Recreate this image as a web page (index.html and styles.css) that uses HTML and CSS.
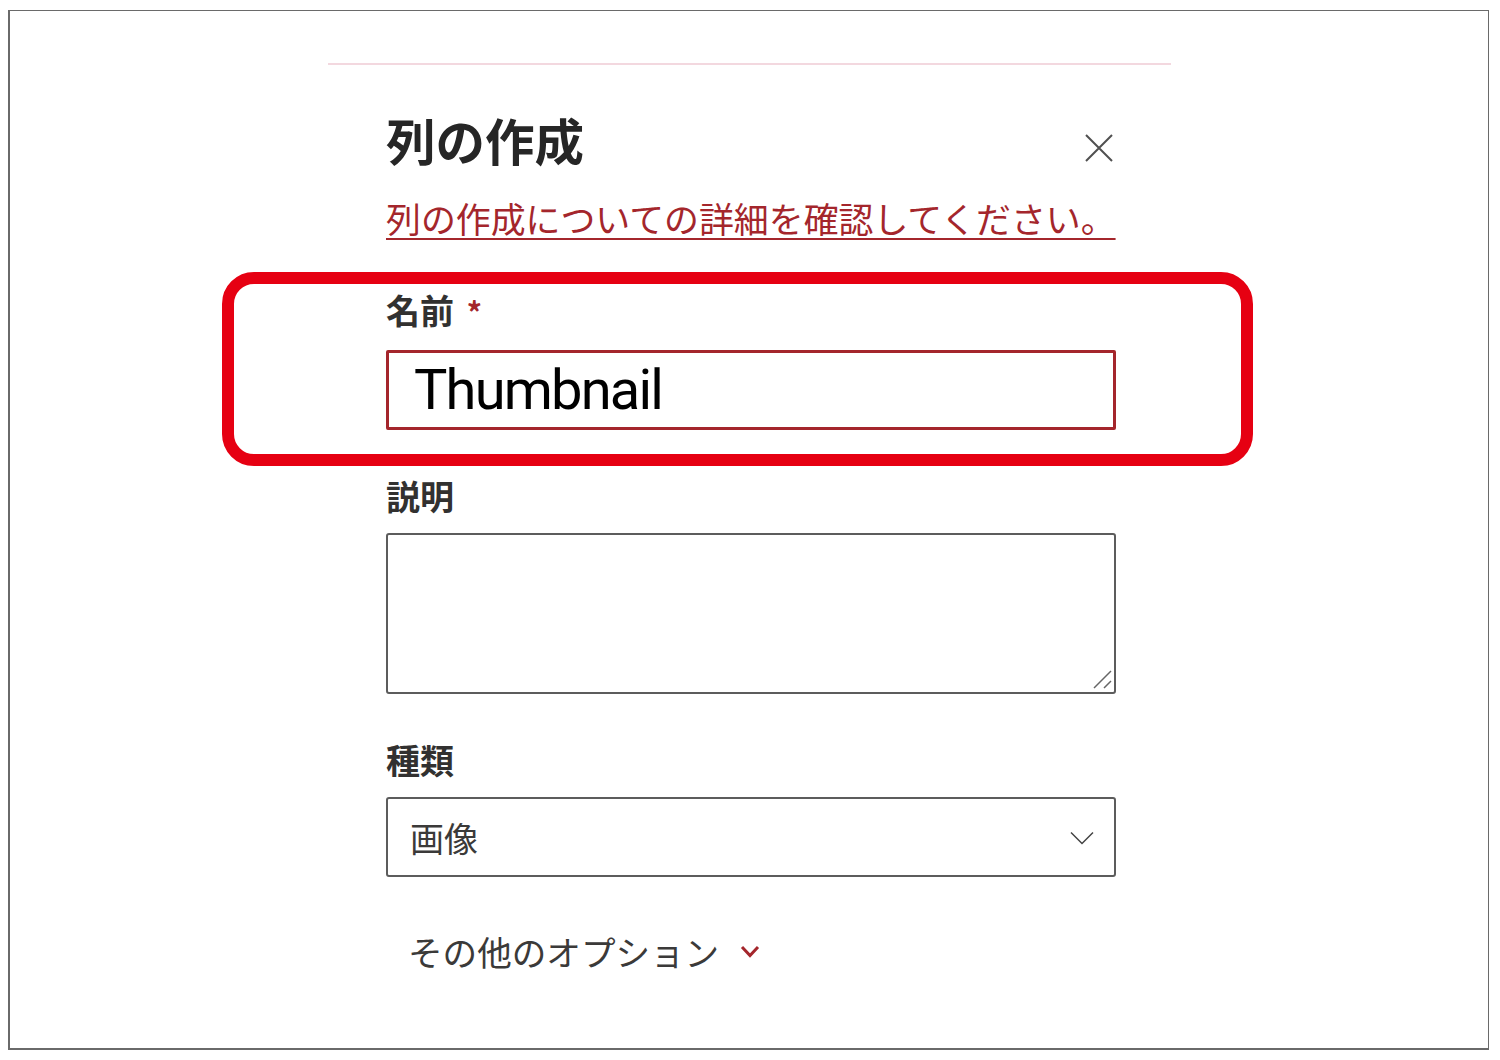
FILE: index.html
```html
<!DOCTYPE html>
<html lang="ja">
<head>
    <meta charset="UTF-8">
    <meta name="viewport" content="width=device-width, initial-scale=1.0">
    <title>列の作成</title>
    <link rel="stylesheet" href="styles.css">
</head>
<body>

<div class="frame">
    <div class="panel">
        <div class="header">
            <h1 class="title">列の作成</h1>
            <div class="close">
                <svg width="28" height="28" viewBox="0 0 28 28">
                    <path d="M1 1 L27 27 M27 1 L1 27" stroke="#505050" stroke-width="2" fill="none"/>
                </svg>
            </div>
        </div>
        <a class="learn" href="#">列の作成についての詳細を確認してください。</a>

        <div class="field field-name">
            <div class="label">名前 <span class="req">*</span></div>
            <div class="box box-active">Thumbnail</div>
            <div class="highlight"></div>
        </div>

        <div class="field">
            <div class="label">説明</div>
            <div class="box box-area">
                <svg class="grip" width="22" height="22" viewBox="0 0 22 22">
                    <path d="M20 2 L3 19 M20 12 L13 19" stroke="#666" stroke-width="1.5" fill="none"/>
                </svg>
            </div>
        </div>

        <div class="field">
            <div class="label">種類</div>
            <div class="box box-select">
                <span>画像</span>
                <svg width="24" height="14" viewBox="0 0 24 14">
                    <path d="M1 1.5 L12 12.5 L23 1.5" stroke="#444" stroke-width="1.5" fill="none"/>
                </svg>
            </div>
        </div>

        <div class="more">
            <span>その他のオプション</span>
            <svg width="20" height="13" viewBox="0 0 20 13">
                <path d="M2 2 L10 10.5 L18 2" stroke="#a4262c" stroke-width="3" fill="none"/>
            </svg>
        </div>
    </div>
</div>

</body>
</html>
```

FILE: styles.css
```css
body {
    margin: 0;
    background-color: #ffffff;
    font-family: "Noto Sans CJK JP", "Noto Sans", sans-serif;
    color: #323130;
    overflow: hidden;
}
.frame {
    box-sizing: border-box;
    width: 1481px;
    height: 1040px;
    margin: 10px 0 0 8px;
    border: 2px solid #6a6a6a;
    border-top-width: 1px;
    border-right-width: 1px;
}
.panel {
    width: 843px;
    margin: 52px 0 0 318px;
    border-top: 2px solid #f3d8df;
    padding-left: 58px;
    box-sizing: border-box;
}
.header {
    width: 730px;
    margin-top: 46px;
    display: flex;
    justify-content: space-between;
    align-items: center;
}
.title {
    margin: 0;
    font-size: 49.5px;
    line-height: 58px;
    font-weight: bold;
    color: #262626;
}
.close {
    width: 28px;
    height: 28px;
    margin: 16px 3px 0 0;
}
.close svg {
    display: block;
}
.learn {
    display: inline-block;
    margin-top: 27px;
    font-size: 34.9px;
    line-height: 45px;
    color: #a4262c;
    text-decoration: underline;
    text-decoration-thickness: 2px;
    text-underline-offset: 5px;
}
.field {
    width: 730px;
    margin-top: 43px;
    position: relative;
}
.field-name {
    margin-top: 46px;
}
.label {
    font-size: 34px;
    line-height: 45px;
    font-weight: bold;
    color: #323130;
}
.req {
    color: #a4262c;
    font-size: 30px;
    margin-left: 5px;
}
.box {
    box-sizing: border-box;
    margin-top: 15px;
    height: 80px;
    border: 2px solid #5c5c5c;
    border-radius: 3px;
    position: relative;
}
.box-active {
    margin-top: 16px;
    border: 3px solid #a4262c;
    border-radius: 2px;
    padding-left: 25px;
    display: flex;
    align-items: center;
    font-family: Roboto, "Open Sans", sans-serif;
    font-size: 56px;
    letter-spacing: -1.8px;
    color: #000000;
}
.box-area {
    margin-top: 15px;
    height: 161px;
}
.grip {
    position: absolute;
    right: 1px;
    bottom: 1px;
}
.box-select {
    display: flex;
    align-items: center;
    justify-content: space-between;
    padding: 0 20px 0 22px;
    font-size: 34px;
    color: #3b3a39;
}
.box-select svg {
    margin-top: 2px;
}
.highlight {
    position: absolute;
    left: -164px;
    top: -15px;
    width: 1031px;
    height: 194px;
    box-sizing: border-box;
    border: 12px solid #e60012;
    border-radius: 32px;
}
.more {
    margin-top: 52px;
    padding-left: 22px;
    display: flex;
    align-items: center;
    gap: 21px;
    font-size: 34.6px;
    line-height: 45px;
    color: #3b3a39;
}
```
